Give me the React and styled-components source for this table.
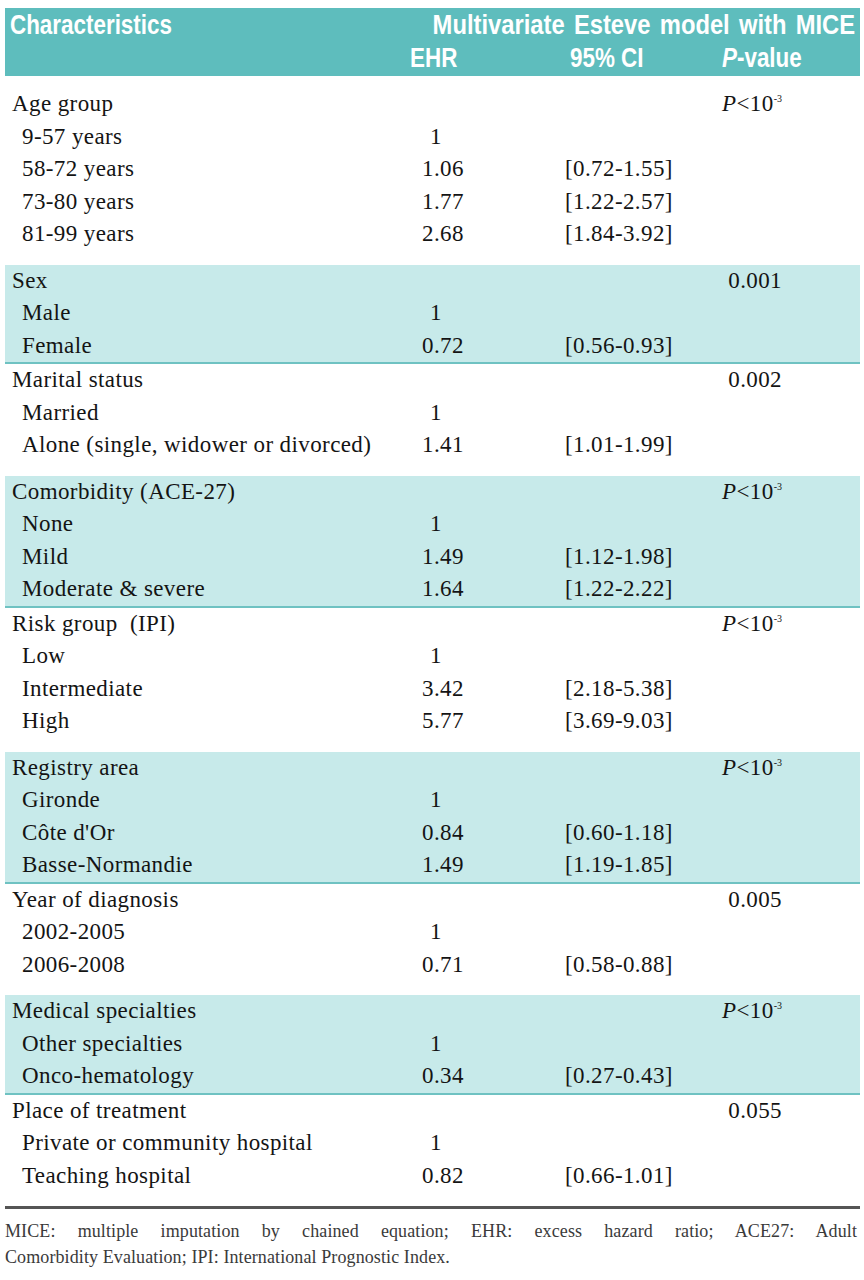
import React from "react";
import styled, { createGlobalStyle } from "styled-components";

const GlobalStyle = createGlobalStyle`
  body {
    margin: 0;
    background: #ffffff;
  }
`;

const Page = styled.div`
  width: 864px;
  box-sizing: border-box;
  padding: 8px 4px 0 5px;
  font-family: "Liberation Serif", "Times New Roman", serif;
  color: #141414;
`;

const Header = styled.div`
  background-color: #5ebdbd;
  color: #ffffff;
  height: 68px;
  font-family: "Liberation Sans", Arial, sans-serif;
  font-weight: 700;
  font-size: 27px;
`;

const TitleRow = styled.div`
  display: flex;
  justify-content: space-between;
  align-items: center;
  height: 35px;
  padding: 0 5px;
`;

const SubHeadRow = styled.div`
  display: grid;
  grid-template-columns: 405px 160px 152px 1fr;
  align-items: center;
  height: 31px;
`;

const HeadText = styled.span`
  display: inline-block;
  transform: scaleX(${(props) => (props.$wide ? 0.88 : 0.83)});
  transform-origin: ${(props) => (props.$right ? "right" : "left")} center;
  word-spacing: ${(props) => (props.$wide ? 3 : 0)}px;
  grid-column: ${(props) => props.$col || "auto"};
  justify-self: start;
`;

const Section = styled.div`
  background-color: ${(props) => (props.$shaded ? "#c7eaea" : "transparent")};
  border-bottom: 2px solid
    ${(props) => (props.$shaded ? "#6fc2c2" : "transparent")};
  padding-top: ${(props) => (props.$first ? 12 : 0)}px;
  padding-bottom: ${(props) => (props.$shaded ? 0 : 12)}px;
`;

const Row = styled.div`
  display: grid;
  grid-template-columns: 417px 143px 140px 77px 1fr;
  align-items: center;
  height: 32.5px;
  font-size: 23px;
  letter-spacing: 0.4px;
  white-space: nowrap;
`;

const Label = styled.span`
  padding-left: ${(props) => (props.$sub ? 17 : 7)}px;
`;

const Value = styled.span`
  padding-left: ${(props) => (props.$lone ? 8 : 0)}px;
`;

const PCell = styled.span`
  grid-column: 4;
  text-align: right;
`;

const Ital = styled.i`
  font-style: italic;
`;

const Sup = styled.sup`
  font-size: 10px;
  vertical-align: 9px;
  line-height: 0;
  letter-spacing: 0;
`;

const BottomRule = styled.div`
  height: 3px;
  background-color: #555555;
`;

const Footnote = styled.div`
  padding: 9px 3px 0 0;
  font-size: 18px;
  line-height: 26px;
  letter-spacing: 0.1px;
  color: #3a3a3a;
`;

const FootLine = styled.div`
  text-align: ${(props) => (props.$justify ? "justify" : "left")};
  text-align-last: ${(props) => (props.$justify ? "justify" : "left")};
  white-space: nowrap;
`;

const PLess = () => (
  <>
    <Ital>P</Ital>&lt;10<Sup>-3</Sup>
  </>
);

const sections = [
  {
    title: "Age group",
    p: "plt",
    rows: [
      ["9-57 years", "1", ""],
      ["58-72 years", "1.06", "[0.72-1.55]"],
      ["73-80 years", "1.77", "[1.22-2.57]"],
      ["81-99 years", "2.68", "[1.84-3.92]"],
    ],
  },
  {
    title: "Sex",
    p: "0.001",
    shaded: true,
    rows: [
      ["Male", "1", ""],
      ["Female", "0.72", "[0.56-0.93]"],
    ],
  },
  {
    title: "Marital status",
    p: "0.002",
    rows: [
      ["Married", "1", ""],
      ["Alone (single, widower or divorced)", "1.41", "[1.01-1.99]"],
    ],
  },
  {
    title: "Comorbidity (ACE-27)",
    p: "plt",
    shaded: true,
    rows: [
      ["None", "1", ""],
      ["Mild", "1.49", "[1.12-1.98]"],
      ["Moderate & severe", "1.64", "[1.22-2.22]"],
    ],
  },
  {
    title: "Risk group\u00a0 (IPI)",
    p: "plt",
    rows: [
      ["Low", "1", ""],
      ["Intermediate", "3.42", "[2.18-5.38]"],
      ["High", "5.77", "[3.69-9.03]"],
    ],
  },
  {
    title: "Registry area",
    p: "plt",
    shaded: true,
    rows: [
      ["Gironde", "1", ""],
      ["Côte d'Or", "0.84", "[0.60-1.18]"],
      ["Basse-Normandie", "1.49", "[1.19-1.85]"],
    ],
  },
  {
    title: "Year of diagnosis",
    p: "0.005",
    rows: [
      ["2002-2005", "1", ""],
      ["2006-2008", "0.71", "[0.58-0.88]"],
    ],
  },
  {
    title: "Medical specialties",
    p: "plt",
    shaded: true,
    rows: [
      ["Other specialties", "1", ""],
      ["Onco-hematology", "0.34", "[0.27-0.43]"],
    ],
  },
  {
    title: "Place of treatment",
    p: "0.055",
    rows: [
      ["Private or community hospital", "1", ""],
      ["Teaching hospital", "0.82", "[0.66-1.01]"],
    ],
  },
];

const App = () => {
  return (
    <Page>
      <GlobalStyle />
      <Header>
        <TitleRow>
          <HeadText>Characteristics</HeadText>
          <HeadText $right $wide>
            Multivariate Esteve model with MICE
          </HeadText>
        </TitleRow>
        <SubHeadRow>
          <HeadText $col={2}>EHR</HeadText>
          <HeadText $col={3}>95% CI</HeadText>
          <HeadText $col={4}>
            <Ital>P</Ital>-value
          </HeadText>
        </SubHeadRow>
      </Header>
      {sections.map((section, i) => (
        <Section key={section.title} $shaded={section.shaded} $first={i === 0}>
          <Row>
            <Label>{section.title}</Label>
            <PCell>{section.p === "plt" ? <PLess /> : section.p}</PCell>
          </Row>
          {section.rows.map(([label, ehr, ci]) => (
            <Row key={label}>
              <Label $sub>{label}</Label>
              <Value $lone={ehr === "1"}>{ehr}</Value>
              <span>{ci}</span>
            </Row>
          ))}
        </Section>
      ))}
      <BottomRule />
      <Footnote>
        <FootLine $justify>
          MICE: multiple imputation by chained equation; EHR: excess hazard
          ratio; ACE27: Adult
        </FootLine>
        <FootLine>
          Comorbidity Evaluation; IPI: International Prognostic Index.
        </FootLine>
      </Footnote>
    </Page>
  );
};

export default App;
